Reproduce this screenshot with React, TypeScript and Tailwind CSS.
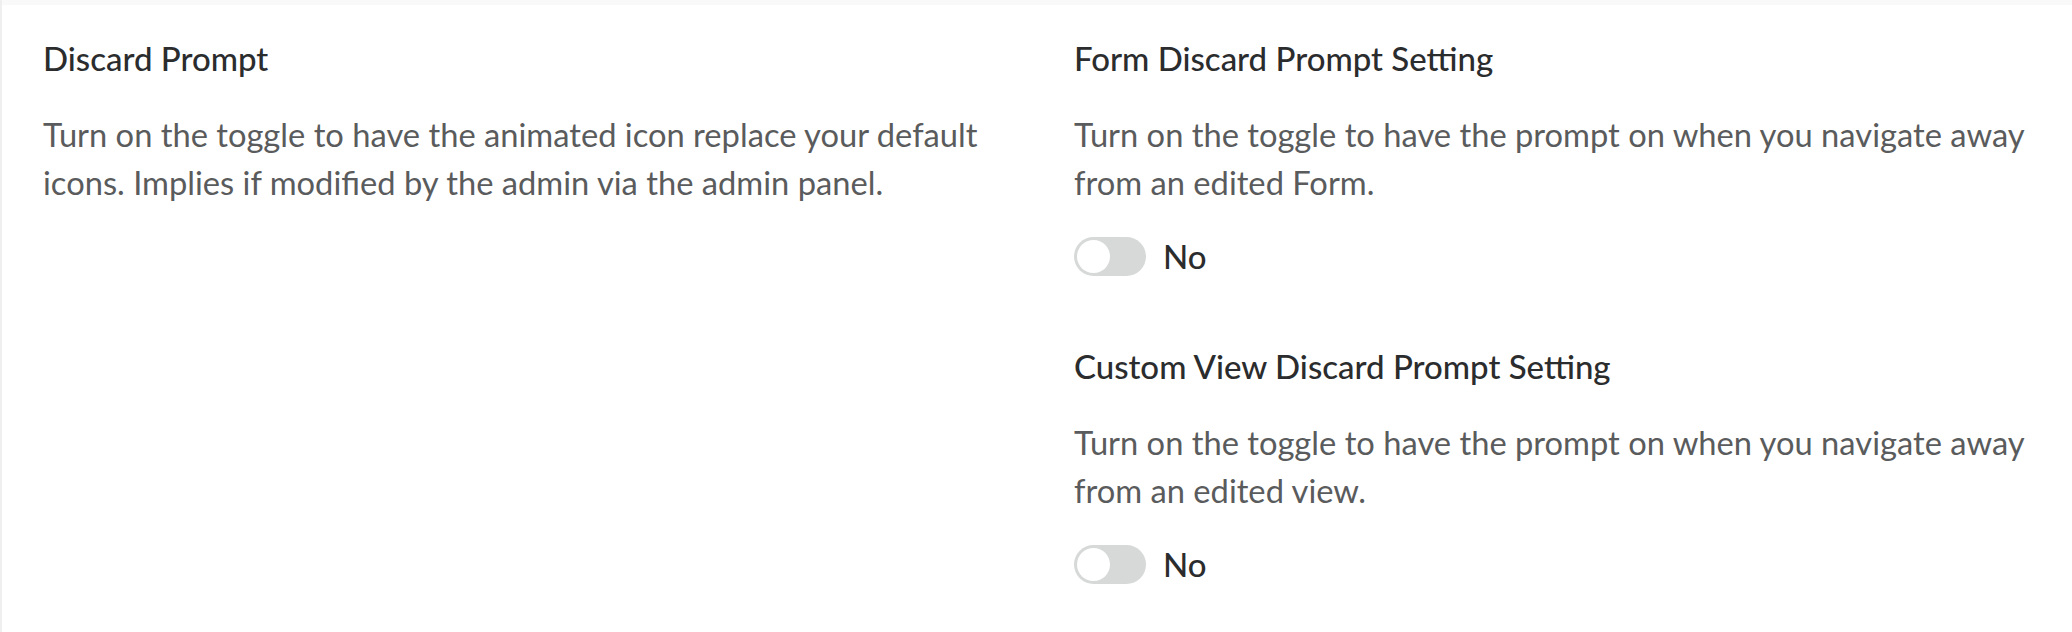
import React, { useState } from "react";

interface PromptSetting {
  id: string;
  title: string;
  description: string;
}

const settings: PromptSetting[] = [
  {
    id: "form",
    title: "Form Discard Prompt Setting",
    description:
      "Turn on the toggle to have the prompt on when you navigate away from an edited Form.",
  },
  {
    id: "view",
    title: "Custom View Discard Prompt Setting",
    description:
      "Turn on the toggle to have the prompt on when you navigate away from an edited view.",
  },
];

const Toggle: React.FC<{ on: boolean; onChange: () => void }> = ({ on, onChange }) => (
  <div className="flex items-center gap-[17px] h-[39px]">
    <button
      type="button"
      onClick={onChange}
      className={`relative w-[72px] h-[39px] rounded-full transition-colors focus:outline-none ${
        on ? "bg-[#3b82f6]" : "bg-[#d7d9d9]"
      }`}
    >
      <span
        className={`absolute top-[3px] left-[3px] w-[33px] h-[33px] rounded-full bg-white transition-transform ${
          on ? "translate-x-[33px]" : "translate-x-0"
        }`}
      />
    </button>
    <span className="text-[33px] leading-[39px] font-medium text-[#2b2c2d]">
      {on ? "Yes" : "No"}
    </span>
  </div>
);

export default function App() {
  const [enabled, setEnabled] = useState<Record<string, boolean>>({
    form: false,
    view: false,
  });

  return (
    <div
      className="min-h-[632px] bg-white border-l-2 border-[#efefef]"
      style={{ fontFamily: "Lato, 'Noto Sans', sans-serif" }}
    >
      <div className="h-[5px] bg-[#f9f9f9]" />
      <div className="flex pl-[41px] pt-[33px] pb-[40px]">
        <div className="w-[1031px] pr-[56px]">
          <h3 className="text-[33px] leading-[40px] font-medium text-[#2b2c2d]">
            Discard Prompt
          </h3>
          <p className="mt-[33px] text-[32.7px] leading-[48px] text-[#5a5b5c]">
            Turn on the toggle to have the animated icon replace your default
            icons. Implies if modified by the admin via the admin panel.
          </p>
        </div>
        <div className="w-[985px] flex flex-col gap-[70px]">
          {settings.map((s) => (
            <div key={s.id}>
              <h3 className="text-[33px] leading-[40px] font-medium text-[#2b2c2d]">
                {s.title}
              </h3>
              <p className="mt-[33px] text-[32.7px] leading-[48px] text-[#5a5b5c]">
                {s.description}
              </p>
              <div className="mt-[30px]">
                <Toggle
                  on={enabled[s.id]}
                  onChange={() =>
                    setEnabled((prev) => ({ ...prev, [s.id]: !prev[s.id] }))
                  }
                />
              </div>
            </div>
          ))}
        </div>
      </div>
    </div>
  );
}
